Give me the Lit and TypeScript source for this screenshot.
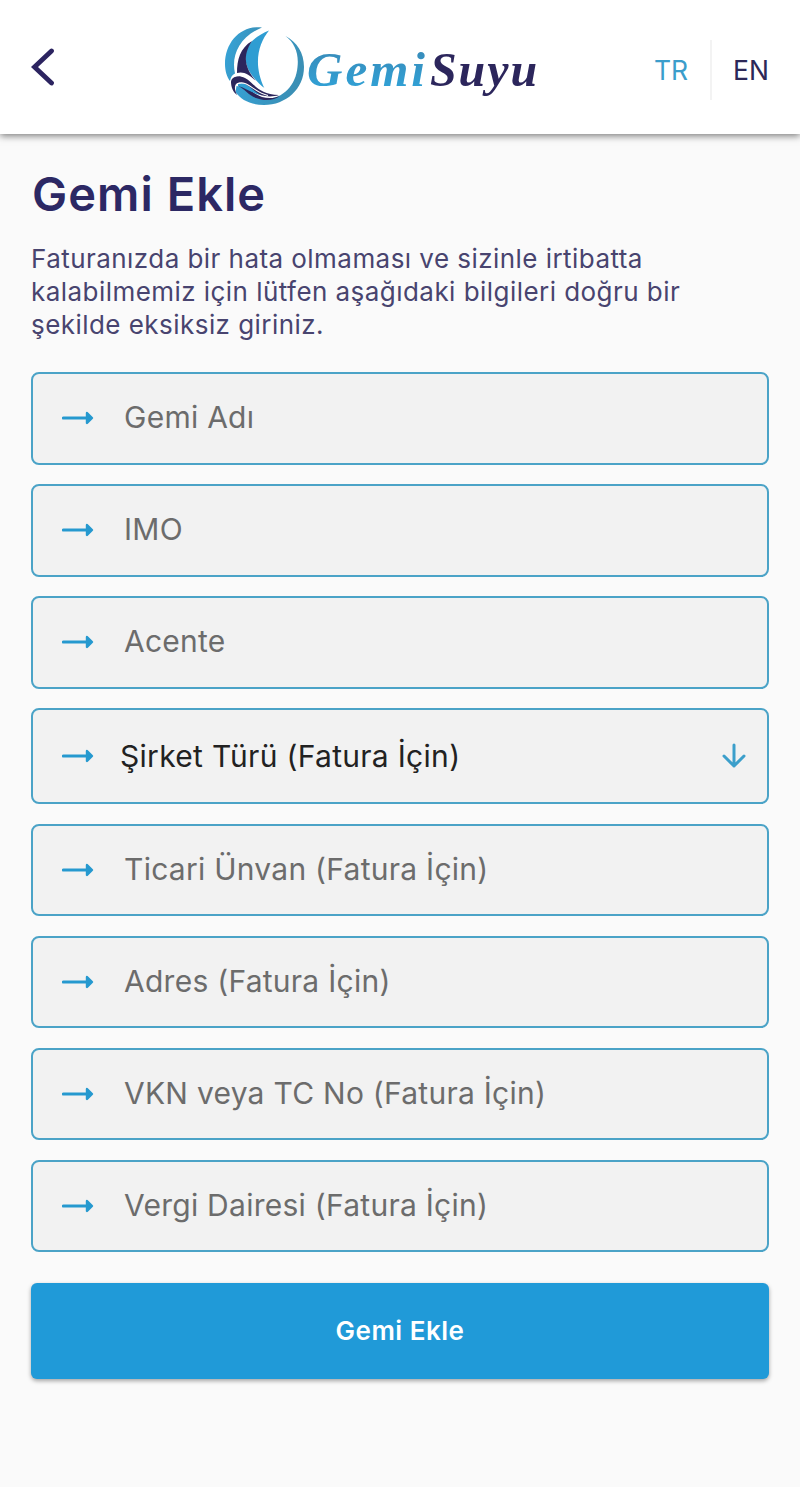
import { LitElement, html, css, svg } from "lit";
import { customElement, property } from "lit/decorators.js";
import { classMap } from "lit/directives/class-map.js";

@customElement("gs-logo")
class GsLogo extends LitElement {
  static styles = css`
    :host { display: block; width: 330px; height: 100px; }
    .logo { display: block; }
    .word { font-family: "Liberation Serif", serif; font-style: italic; font-weight: 700; font-size: 49px; }
    .light { fill: url(#wordBlue); letter-spacing: 3px; }
    .dark { fill: #2c265c; letter-spacing: 2px; }
  `;
  render() {
    return html`<svg class="logo" width="330" height="100" viewBox="215 15 330 100">
      ${svg`
      <defs>
        <linearGradient id="ringBlue" x1="0" y1="0" x2="1" y2="0.3">
          <stop offset="0" stop-color="#35a5db"/><stop offset="1" stop-color="#3a8fb5"/>
        </linearGradient>
        <linearGradient id="wordBlue" x1="0" y1="0" x2="0" y2="1">
          <stop offset="0" stop-color="#3a87b4"/><stop offset="1" stop-color="#2fa6dc"/>
        </linearGradient>
      </defs>
      <path fill="url(#ringBlue)" d="M262 27.500 C241 25 225 42 225 64 C225 71 227 77 230 81 C231 77 232 75 235 73.500 C231 56 239 37 262 27.500Z"/>
      <path fill="url(#ringBlue)" d="M285.500 36 C297 42 304 53 304 67 C304 89 286 105 264 105 C251 105 241 100 235.500 92 L236.500 86 C246 87 253 97 266 99 C283 99 296 85 297.500 67 C299 54 295 43 285.500 36Z"/>
      <path fill="#2f9dd2" d="M269 30.500 C258 44 253 65 264.500 88.500 C254 79 243 68 246 52 C248 42 258 35 269 30.500Z"/>
      <path fill="#2c265c" d="M252 41 C240 48 237 60 237 73 C243 71 249 74 256 81 C245 68 242 56 252 41Z"/>
      <path fill="#2c265c" d="M231 82 C231 77 238 74 245 78 C254 83 258 94 279 95 C270 98 260 96 254 92 C247 86 241 80 236 84 C234 87 235 91 237 95 C233 92 231 87 231 82Z"/>
      <path fill="none" stroke="#fff" stroke-width="1.400" d="M234 76 C248 72 253 84 265 89"/>
      <path fill="#2c265c" d="M238 86 C247 84 252 94 262 97 C269 99 275 98 280 96 C274 101 263 101 256 98 C248 95 245 89 238 86Z"/>
      <path fill="#2f9dd2" d="M238 84 C246 80 252 91 261 95 C253 94 246 88 238 86Z"/>
      <path fill="none" stroke="#fff" stroke-width="1.100" d="M237 84 C247 79 253 92 268 95.500"/>
      <text class="word light" x="307" y="86" textLength="121" lengthAdjust="spacingAndGlyphs">Gemi</text>
      <text class="word dark" x="430" y="86" textLength="109" lengthAdjust="spacingAndGlyphs">Suyu</text>`}
    </svg>`;
  }
}

@customElement("gs-field")
class GsField extends LitElement {
  @property() label = "";
  @property({ type: Boolean }) select = false;
  static styles = css`
    :host { display: block; }
    .field {
      box-sizing: border-box; height: 92.500px; display: flex; align-items: center;
      border: 2px solid #4ba3c7; border-radius: 8px; background: #f2f2f2;
      padding: 0 20px 0 29px; color: #6c6c6c; font-size: 30px; letter-spacing: 0.260px;
    }
    .field.select { height: 96px; color: #222; letter-spacing: 0.300px; }
    .arrow { flex: none; margin-right: 30px; }
    .select .arrow { margin-right: 26px; }
    .label { flex: 1; white-space: nowrap; line-height: 36px; padding-bottom: 2px; }
    .select .label { padding-bottom: 0; }
    .down { flex: none; }
  `;
  render() {
    return html`<div class=${classMap({ field: true, select: this.select })}>
      <svg class="arrow" width="32" height="16" viewBox="0 0 32 16">
        <path d="M1.500 8H25" stroke="#2699cf" stroke-width="3.200" stroke-linecap="round"/>
        <path d="M25 3L30 8L25 13Z" fill="#2699cf" stroke="#2699cf" stroke-width="2.400" stroke-linejoin="round"/>
      </svg>
      <span class="label">${this.label}</span>
      ${this.select
        ? html`<svg class="down" width="26" height="26" viewBox="0 0 26 26">
            <path d="M13 2V23M3 13L13 23L23 13" fill="none" stroke="#3c9fcb" stroke-width="3" stroke-linecap="round" stroke-linejoin="round"/>
          </svg>`
        : null}
    </div>`;
  }
}

@customElement("app-root")
class AppRoot extends LitElement {
  static styles = css`
    :host { display: block; font-family: Inter, sans-serif; color: #2c2864; }
    .page { min-height: 1487px; background: #fafafa; }
    .bar {
      box-sizing: border-box; height: 134px; background: #fff; display: flex;
      align-items: flex-start; padding: 15px 31px 0 31px; box-shadow: 0 2px 7px rgba(0, 0, 0, 0.5);
    }
    .back { margin-top: 31px; margin-right: 158px; flex: none; }
    .langs { margin: 25px 0 0 auto; display: flex; align-items: center; font-size: 26.500px; height: 60px; }
    .lang { color: #2c2858; line-height: 60px; }
    .lang.active { color: #3b9dcb; padding-right: 22px; border-right: 2px solid #f3f3f3; margin-right: 21px; }
    .content { padding: 32px 31px 0; }
    .title { margin: 0 0 0 1px; font-size: 47px; line-height: 56px; font-weight: 600; letter-spacing: 1.050px; }
    .intro { margin: 20px 0 0; font-size: 26px; line-height: 33px; letter-spacing: 0.450px; color: #48446f; white-space: nowrap; }
    .form { display: flex; flex-direction: column; gap: 19.500px; margin-top: 31px; }
    .submit {
      display: block; width: 100%; height: 96px; margin-top: 31px; border: 0; border-radius: 6px;
      padding: 0 0 2px; background: #209ad8; color: #fff; font: 600 26px Inter, sans-serif; letter-spacing: 0.500px;
      box-shadow: 0 2px 4px rgba(0, 0, 0, 0.35);
    }
  `;
  render() {
    const fields = [
      "Gemi Adı", "IMO", "Acente", "Şirket Türü (Fatura İçin)", "Ticari Ünvan (Fatura İçin)",
      "Adres (Fatura İçin)", "VKN veya TC No (Fatura İçin)", "Vergi Dairesi (Fatura İçin)",
    ];
    return html`<div class="page">
      <header class="bar">
        <svg class="back" width="26" height="42" viewBox="0 0 26 42">
          <path d="M20.500 5L3.500 21L20.500 37" fill="none" stroke="#2c2460" stroke-width="4.800" stroke-linecap="round"/>
        </svg>
        <gs-logo></gs-logo>
        <nav class="langs"><span class="lang active">TR</span><span class="lang">EN</span></nav>
      </header>
      <main class="content">
        <h1 class="title">Gemi Ekle</h1>
        <p class="intro">Faturanızda bir hata olmaması ve sizinle irtibatta<br />kalabilmemiz için lütfen aşağıdaki bilgileri doğru bir<br />şekilde eksiksiz giriniz.</p>
        <div class="form">
          ${fields.map((f, i) => html`<gs-field .label=${f} .select=${i === 3}></gs-field>`)}
        </div>
        <button class="submit">Gemi Ekle</button>
      </main>
    </div>`;
  }
}
